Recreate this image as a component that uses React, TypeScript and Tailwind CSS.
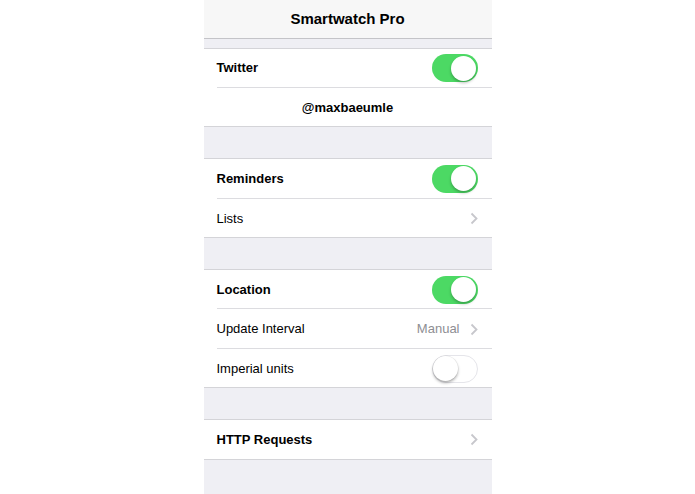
import React from "react";

const font = { fontFamily: '"Liberation Sans", Arial, sans-serif' };

function Toggle({ on }: { on: boolean }) {
  return on ? (
    <div className="relative h-[28px] w-[46px] rounded-full bg-[#4cd964]">
      <div className="absolute right-[1.5px] top-[1.5px] h-[25px] w-[25px] rounded-full bg-white shadow-[0_2px_3px_rgba(0,0,0,0.25)]" />
    </div>
  ) : (
    <div className="relative h-[28px] w-[46px] rounded-full border-[1.5px] border-[#e5e5ea] bg-white">
      <div className="absolute left-0 top-0 h-[25px] w-[25px] rounded-full bg-white shadow-[0_2px_3px_rgba(0,0,0,0.3),0_0_0_0.5px_rgba(0,0,0,0.08)]" />
    </div>
  );
}

function Chevron() {
  return (
    <svg width="8" height="13" viewBox="0 0 8 13" className="ml-[10px]">
      <path d="M1.5 1.5 L6.5 6.5 L1.5 11.5" fill="none" stroke="#c7c7cc" strokeWidth="1.8" />
    </svg>
  );
}

function Row({
  label,
  bold,
  right,
  last,
  center,
}: {
  label: string;
  bold?: boolean;
  right?: React.ReactNode;
  last?: boolean;
  center?: boolean;
}) {
  return (
    <div
      className={`relative flex h-[39.4px] items-center bg-white ${
        center ? "justify-center" : "pl-[13px] pr-[14px]"
      }`}
    >
      <span className={`text-[13px] text-black ${bold ? "font-bold" : ""}`}>{label}</span>
      {!center && <div className="ml-auto flex items-center">{right}</div>}
      <div
        className={`absolute bottom-0 right-0 h-px ${
          last ? "left-0 bg-[#d4d4d8]" : "left-[13px] bg-[#dcdce0]"
        }`}
      />
    </div>
  );
}

function Group({ children }: { children: React.ReactNode }) {
  return <div className="border-t border-[#d4d4d8]">{children}</div>;
}

export default function App() {
  return (
    <div className="flex h-[494px] w-[695px] justify-center bg-white" style={font}>
      <div className="flex w-[288px] flex-col bg-[#efeff4]">
        <div className="flex h-[39px] items-center justify-center border-b border-[#c4c4c8] bg-[#f7f7f7]">
          <span className="text-[15px] font-bold text-black">Smartwatch Pro</span>
        </div>
        <div className="h-[8.5px]" />
        <Group>
          <Row label="Twitter" bold right={<Toggle on />} />
          <Row label="@maxbaeumle" bold center last />
        </Group>
        <div className="h-[31px]" />
        <Group>
          <Row label="Reminders" bold right={<Toggle on />} />
          <Row label="Lists" last right={<Chevron />} />
        </Group>
        <div className="h-[31px]" />
        <Group>
          <Row label="Location" bold right={<Toggle on />} />
          <Row
            label="Update Interval"
            right={
              <>
                <span className="text-[13px] text-[#8e8e93]">Manual</span>
                <Chevron />
              </>
            }
          />
          <Row label="Imperial units" last right={<Toggle on={false} />} />
        </Group>
        <div className="h-[31px]" />
        <Group>
          <Row label="HTTP Requests" bold last right={<Chevron />} />
        </Group>
      </div>
    </div>
  );
}
